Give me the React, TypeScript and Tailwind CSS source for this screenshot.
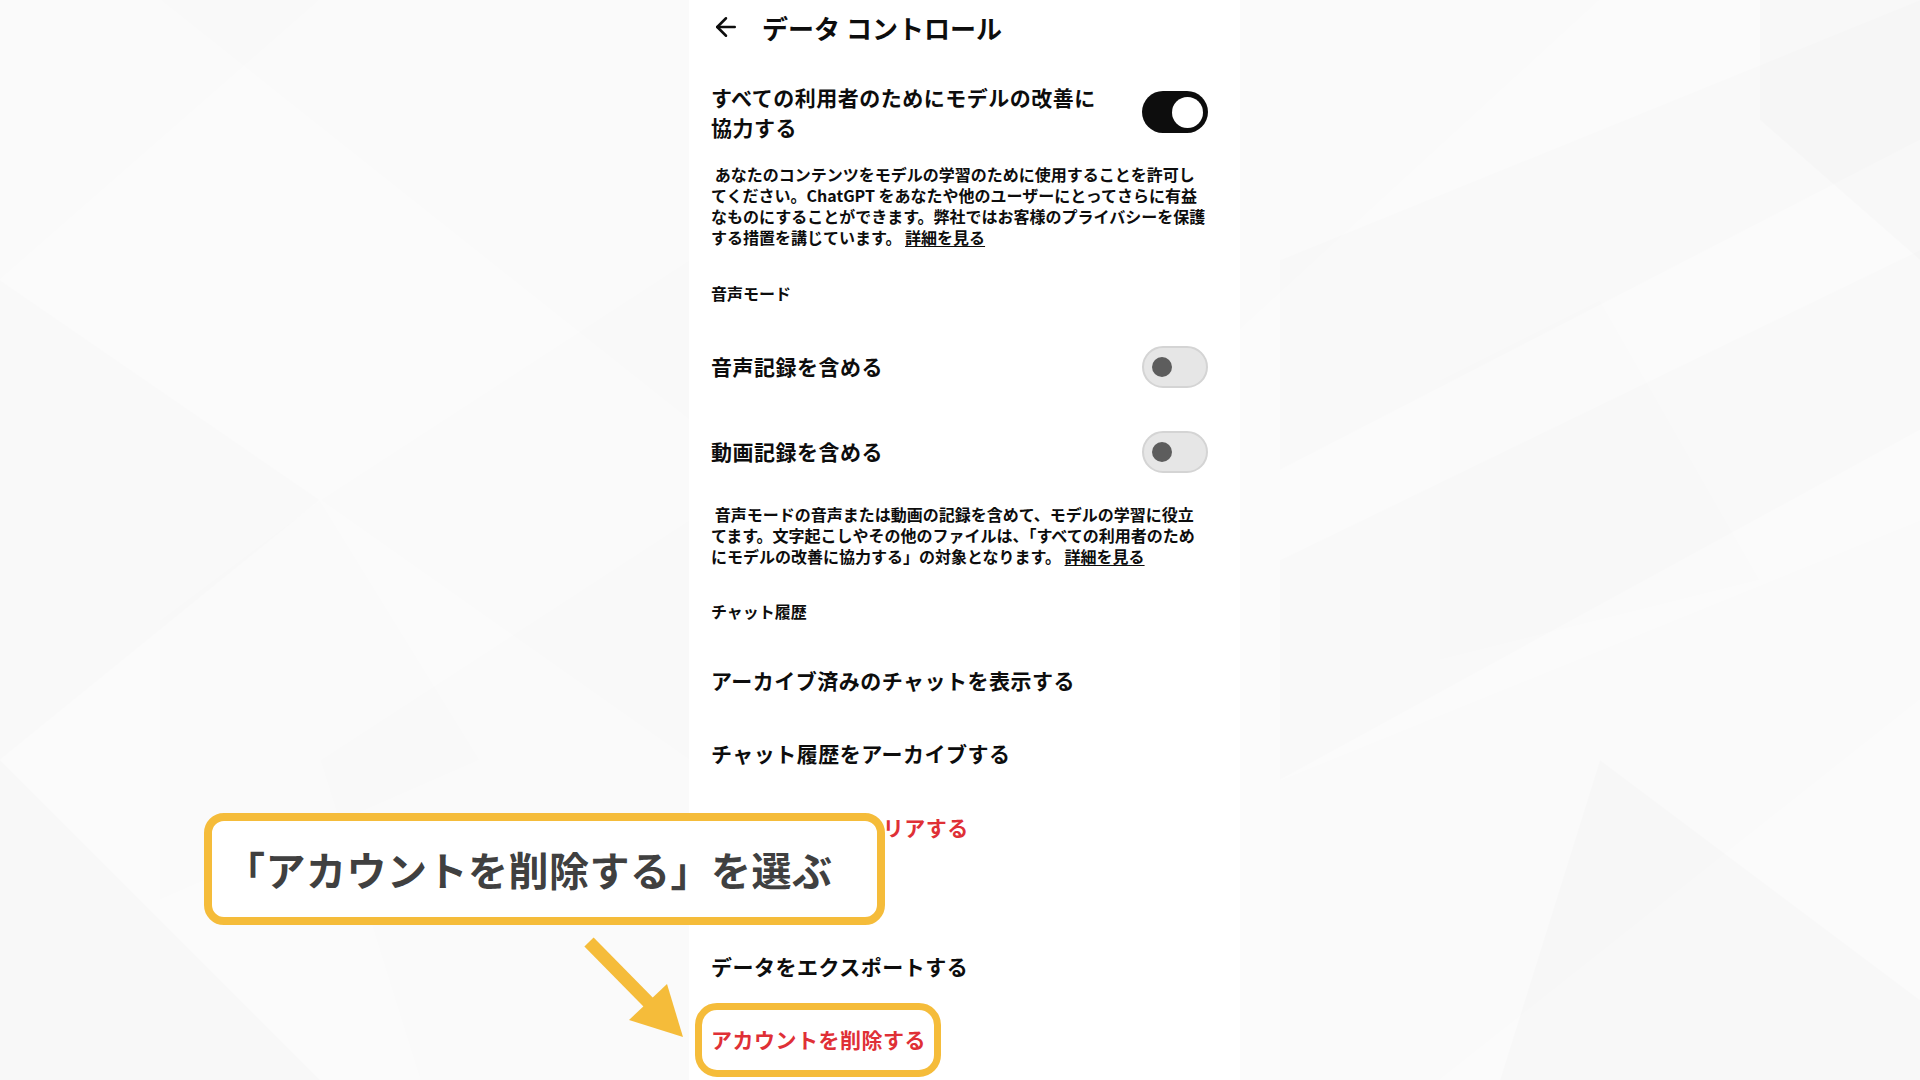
import { ArrowLeft } from 'lucide-react'

const jp = "font-['Noto_Sans_CJK_JP','Noto_Sans',sans-serif]"

function Toggle({ on }: { on: boolean }) {
  if (on) {
    return (
      <div className="flex h-[42px] w-[66px] shrink-0 items-center justify-end rounded-full bg-[#0d0d0d] pr-[5px]">
        <div className="h-[31px] w-[31px] rounded-full bg-white" />
      </div>
    )
  }
  return (
    <div className="flex h-[42px] w-[66px] shrink-0 items-center rounded-full border-2 border-[#d4d4d4] bg-[#e6e6e6] pl-[8px]">
      <div className="h-[20px] w-[20px] rounded-full bg-[#5d5d5d]" />
    </div>
  )
}

function Row({ label, className = '', red = false }: { label: string; className?: string; red?: boolean }) {
  return (
    <div className={`flex items-center ${className}`}>
      <span
        className={`text-[21px] font-bold tracking-[0.5px] ${red ? 'text-[#df3036]' : 'text-[#0d0d0d]'}`}
      >
        {label}
      </span>
    </div>
  )
}

function Background() {
  // faint low-poly facets behind the phone screen
  return (
    <svg className="absolute inset-0 h-full w-full" viewBox="0 0 1920 1080" preserveAspectRatio="none">
      <rect width="1920" height="1080" fill="#fbfbfb" />
      <g fill="#000">
        <polygon points="0,0 320,0 0,280" fillOpacity="0.005" />
        <polygon points="160,0 689,0 689,420" fillOpacity="0.003" />
        <polygon points="0,280 320,500 0,760" fillOpacity="0.008" />
        <polygon points="320,500 689,260 689,760" fillOpacity="0.004" />
        <polygon points="0,760 320,1080 0,1080" fillOpacity="0.01" />
        <polygon points="320,760 689,520 689,1080 420,1080" fillOpacity="0.005" />
        <polygon points="160,620 320,500 480,760 160,900" fillOpacity="0.004" />
        <polygon points="1240,0 1600,0 1240,330" fillOpacity="0.004" />
        <polygon points="1280,260 1920,0 1920,140 1280,470" fillOpacity="0.006" />
        <polygon points="1280,560 1920,250 1920,430 1280,780" fillOpacity="0.009" />
        <polygon points="1280,780 1920,520 1920,700 1440,1080 1280,1080" fillOpacity="0.005" />
        <polygon points="1440,380 1600,300 1760,580 1440,660" fillOpacity="0.005" />
        <polygon points="1600,760 1920,1000 1920,1080 1500,1080" fillOpacity="0.01" />
        <polygon points="1760,0 1920,0 1920,260 1760,120" fillOpacity="0.01" />
      </g>
    </svg>
  )
}

export default function App() {
  return (
    <div className={`relative h-[1080px] w-[1920px] overflow-hidden ${jp}`}>
      <Background />

      <div className="relative flex h-full">
        <div className="w-[689px] shrink-0" />

        {/* phone screen */}
        <div className="flex w-[551px] shrink-0 flex-col bg-white pl-[22px] pr-[32px] text-[#0d0d0d]">
          <div className="flex h-[54px] items-center">
            <ArrowLeft className="h-[30px] w-[30px]" strokeWidth={2} />
            <span className="ml-[21px] text-[26px] font-bold">データ コントロール</span>
          </div>

          <div className="mt-[22px] flex h-[72px] items-center justify-between">
            <span className="text-[21px] font-bold leading-[30px] tracking-[0.5px]">
              すべての利用者のためにモデルの改善に
              <br />
              協力する
            </span>
            <Toggle on />
          </div>

          <p className="mt-[16px] whitespace-nowrap text-[16px] font-semibold leading-[21px]">
            {'\u00a0'}あなたのコンテンツをモデルの学習のために使用することを許可し
            <br />
            てください。ChatGPT をあなたや他のユーザーにとってさらに有益
            <br />
            なものにすることができます。弊社ではお客様のプライバシーを保護
            <br />
            する措置を講じています。 <span className="underline underline-offset-2">詳細を見る</span>
          </p>

          <div className="mt-[20px] flex h-[50px] items-center text-[16px] font-bold">音声モード</div>

          <div className="mt-[6px] flex h-[85px] items-center justify-between">
            <span className="text-[21px] font-bold tracking-[0.5px]">音声記録を含める</span>
            <Toggle on={false} />
          </div>
          <div className="flex h-[85px] items-center justify-between">
            <span className="text-[21px] font-bold tracking-[0.5px]">動画記録を含める</span>
            <Toggle on={false} />
          </div>

          <p className="mt-[10px] whitespace-nowrap text-[16px] font-semibold leading-[21px]">
            {'\u00a0'}音声モードの音声または動画の記録を含めて、モデルの学習に役立
            <br />
            てます。文字起こしやその他のファイルは、「すべての利用者のため
            <br />
            にモデルの改善に協力する」の対象となります。 <span className="underline underline-offset-2">詳細を見る</span>
          </p>

          <div className="mt-[19px] flex h-[50px] items-center text-[16px] font-bold">チャット履歴</div>

          <Row label="アーカイブ済みのチャットを表示する" className="mt-[9px] h-[72px]" />
          <Row label="チャット履歴をアーカイブする" className="h-[74px]" />
          <Row label="チャット履歴をクリアする" className="h-[74px]" red />
          <div className="h-[66px]" />
          <Row label="データをエクスポートする" className="h-[72px]" />
          <div className="relative flex h-[74px] items-center">
            <span className="text-[21px] font-bold tracking-[0.5px] text-[#df3036]">アカウントを削除する</span>
            {/* highlight ring */}
            <div className="absolute left-[-16px] top-0 h-[74px] w-[246px] rounded-[22px] border-[7px] border-[#f5bc3a]" />
          </div>
        </div>

        <div className="flex-1" />
      </div>

      {/* callout */}
      <div className="absolute left-[204px] top-[813px] flex h-[112px] w-[681px] items-center rounded-[20px] border-[8px] border-[#f5bc3a] bg-white pl-[13px]">
        <span className="text-[40px] font-bold tracking-[0.5px] text-[#404040]">「アカウントを削除する」を選ぶ</span>
      </div>

      {/* pointer arrow */}
      <svg className="absolute left-0 top-0 h-[1080px] w-[1920px]" viewBox="0 0 1920 1080">
        <line x1="589" y1="942" x2="652" y2="1006" stroke="#f5bc3a" strokeWidth="13" />
        <polygon points="629,1020 667,984 683,1037" fill="#f5bc3a" />
      </svg>
    </div>
  )
}
